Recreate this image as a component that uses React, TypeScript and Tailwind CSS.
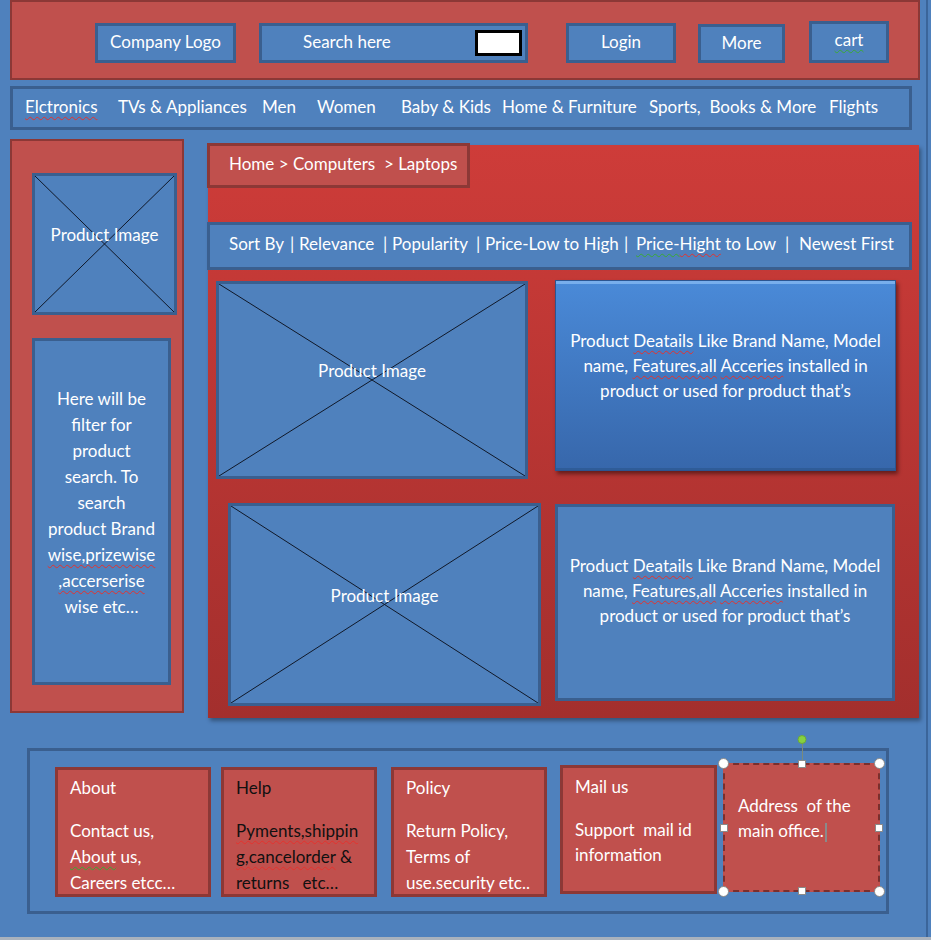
import React from "react";

const blueBox = "bg-[#4f81bd] border-[3px] border-[#3a5f8f]";
const redBox = "bg-[#c0504d] border-[3px] border-[#8c3836]";
const redWave = "underline decoration-wavy decoration-[#e5322d] decoration-1 underline-offset-[3px]";
const greenWave = "underline decoration-wavy decoration-[#3aa935] decoration-1 underline-offset-[3px]";

const navItems: [string, number][] = [
  ["Elctronics", 93],
  ["TVs & Appliances", 144],
  ["Men", 55],
  ["Women", 84],
  ["Baby & Kids", 101],
  ["Home & Furniture", 147],
  ["Sports,  Books & More", 180],
  ["Flights", 60],
];

// width of each slot in the sort bar, taken from where the next piece starts
const sortItems: [React.ReactNode, number][] = [
  ["Sort By", 61],
  ["|", 9],
  ["Relevance", 84],
  ["|", 9],
  ["Popularity", 84],
  ["|", 9],
  ["Price-Low to High", 139],
  ["|", 12],
  [
    <>
      <span className={greenWave}>Price-</span>
      <span className={redWave}>Hight</span> to Low
    </>,
    149,
  ],
  ["|", 14],
  ["Newest First", 100],
];

function ImageBox({ className }: { className: string }) {
  return (
    <div className={`relative ${blueBox} ${className}`}>
      <svg className="absolute inset-0 h-full w-full" viewBox="0 0 100 100" preserveAspectRatio="none">
        <line x1="0" y1="0" x2="100" y2="100" stroke="#101828" strokeWidth="1" vectorEffect="non-scaling-stroke" />
        <line x1="100" y1="0" x2="0" y2="100" stroke="#101828" strokeWidth="1" vectorEffect="non-scaling-stroke" />
      </svg>
      <div className="relative flex h-full items-center justify-center pb-[18px] text-white">Product Image</div>
    </div>
  );
}

function DetailsText() {
  return (
    <>
      Product <span className={redWave}>Deatails</span> Like Brand Name, Model
      <br />
      name, <span className={redWave}>Features,all</span> <span className={redWave}>Acceries</span> installed in
      <br />
      product or used for product that’s
    </>
  );
}

function Handle({ className, round }: { className: string; round?: boolean }) {
  return (
    <span
      className={`absolute bg-white border border-[#8a8a8a] ${
        round ? "h-[11px] w-[11px] rounded-full" : "h-[8px] w-[8px]"
      } ${className}`}
    />
  );
}

export default function App() {
  return (
    <div className="h-[940px] w-[931px] bg-[#a9b2bd] font-[Lato,'Open_Sans',sans-serif] text-[17px] text-white">
      <div className="h-[937px] w-[931px] bg-[#4f81bd]">
        <div className="h-[937px] w-[928px] border-r-2 border-[#3b659a]">
          {/* Header */}
          <div className="ml-[10px] flex h-[80px] w-[910px] items-end border-2 border-[#8c3836] bg-[#c0504d] pb-[15px]">
            <div className={`ml-[83px] flex h-[40px] w-[141px] items-center justify-center pb-[2px] ${blueBox}`}>Company Logo</div>
            <div className={`ml-[23px] flex h-[40px] w-[269px] items-center ${blueBox}`}>
              <span className="pb-[2px] pl-[41px]">Search here</span>
              <span className="ml-auto mr-[3px] h-[26px] w-[47px] border-[3px] border-black bg-white" />
            </div>
            <div className={`ml-[38px] flex h-[40px] w-[110px] items-center justify-center pb-[2px] ${blueBox}`}>Login</div>
            <div className={`ml-[22px] flex h-[39px] w-[87px] items-center justify-center pb-[2px] ${blueBox}`}>More</div>
            <div className={`ml-[24px] flex h-[42px] w-[80px] items-center justify-center pb-[5px] ${blueBox}`}>
              <span className={greenWave}>cart</span>
            </div>
          </div>

          {/* Category nav */}
          <div className={`ml-[10px] mt-[6px] flex h-[44px] w-[902px] items-center pb-[3px] pl-[12px] ${blueBox}`}>
            {navItems.map(([label, w], i) => (
              <span key={label} className="whitespace-pre" style={{ width: w }}>
                {i === 0 ? <span className={redWave}>{label}</span> : label}
              </span>
            ))}
          </div>

          {/* Body */}
          <div className="mt-[9px] flex items-start">
            <div className="ml-[10px] h-[574px] w-[174px] border-2 border-[#8c3836] bg-[#c0504d]">
              <ImageBox className="ml-[20px] mt-[32px] h-[142px] w-[145px]" />
              <div className={`ml-[20px] mt-[23px] h-[347px] w-[139px] pt-[45px] text-center leading-[26px] ${blueBox}`}>
                Here will be
                <br />
                filter for
                <br />
                product
                <br />
                search. To
                <br />
                search
                <br />
                product Brand
                <br />
                <span className={redWave}>wise,prizewise</span>
                <br />
                <span className={redWave}>,accerserise</span>
                <br />
                wise etc…
              </div>
            </div>

            <div className="ml-[24px] mt-[6px] flex h-[573px] w-[711px] flex-col bg-gradient-to-b from-[#ce3c39] to-[#a32f2d] shadow-[2px_3px_4px_rgba(0,0,0,0.35)]">
              <div className={`-ml-px -mt-[2px] flex h-[45px] w-[263px] items-center pb-[4px] pl-[19px] ${redBox}`}>
                Home &gt; Computers &nbsp;&gt; Laptops
              </div>
              <div className={`-ml-px mt-[34px] flex h-[48px] w-[705px] items-center pb-[5px] pl-[19px] ${blueBox}`}>
                {sortItems.map(([label, w], i) => (
                  <span key={i} className="whitespace-pre" style={{ width: w }}>
                    {label}
                  </span>
                ))}
              </div>

              <div className="mt-[11px] flex items-start">
                <ImageBox className="ml-[8px] h-[198px] w-[312px]" />
                <div className="-mt-px ml-[27px] h-[191px] w-[341px] border border-[#2c5590] bg-gradient-to-b from-[#4a8ad8] to-[#3767ab] pt-[47px] text-center leading-[25px] shadow-[inset_0_3px_0_#78aeec,inset_0_-2px_0_#2f5c98,2px_3px_4px_rgba(0,0,0,0.45)]">
                  <DetailsText />
                </div>
              </div>

              <div className="mt-[24px] flex items-start">
                <ImageBox className="ml-[20px] h-[203px] w-[313px]" />
                <div className={`ml-[14px] mt-px h-[197px] w-[340px] pt-[46px] text-center leading-[25px] ${blueBox}`}>
                  <DetailsText />
                </div>
              </div>
            </div>
          </div>

          {/* Footer */}
          <div className={`ml-[27px] mt-[30px] flex h-[166px] w-[862px] items-start ${blueBox}`}>
            <div className={`ml-[25px] mt-[16px] h-[130px] w-[156px] overflow-hidden pl-[12px] pt-[5px] leading-[26px] ${redBox}`}>
              <div>About</div>
              <div className="mt-[17px]">
                Contact us,
                <br />
                <span className={greenWave}>About</span> us,
                <br />
                Careers etcc…
              </div>
            </div>
            <div className={`ml-[10px] mt-[16px] h-[130px] w-[156px] overflow-hidden pl-[12px] pt-[5px] leading-[26px] text-[#111] ${redBox}`}>
              <div>Help</div>
              <div className="mt-[17px]">
                <span className={redWave}>Pyments,shippin</span>
                <br />
                <span className={redWave}>g,cancelorder</span> &amp;
                <br />
                <span className="whitespace-pre">returns   etc…</span>
              </div>
            </div>
            <div className={`ml-[14px] mt-[16px] h-[130px] w-[156px] overflow-hidden pl-[12px] pt-[5px] leading-[26px] ${redBox}`}>
              <div>Policy</div>
              <div className="mt-[17px]">
                Return Policy,
                <br />
                Terms of
                <br />
                use.security etc..
              </div>
            </div>
            <div className={`ml-[13px] mt-[14px] h-[129px] w-[157px] overflow-hidden pl-[12px] pt-[6px] leading-[25px] ${redBox}`}>
              <div>Mail us</div>
              <div className="mt-[18px] whitespace-pre">
                Support  mail id
                <br />
                information
              </div>
            </div>
            <div className="relative ml-[6px] mt-[12px] h-[129px] w-[157px] border-2 border-dashed border-[#7a2f2d] bg-[#c0504d] pl-[13px] pt-[28px] leading-[25px]">
              <span className="whitespace-pre">Address  of the</span>
              <br />
              main office.
              <span className="ml-[1px] inline-block h-[19px] w-[2px] bg-[#8a8a8a] align-middle" />
              {/* selection handles */}
              <span className="absolute -top-[30px] left-1/2 h-[9px] w-[9px] -translate-x-1/2 rounded-full border border-[#6aa83a] bg-[#86d140]" />
              <span className="absolute -top-[21px] left-1/2 h-[17px] w-px bg-[#7a8a7a]" />
              <Handle round className="-left-[7px] -top-[7px]" />
              <Handle round className="-right-[7px] -top-[7px]" />
              <Handle round className="-bottom-[7px] -left-[7px]" />
              <Handle round className="-bottom-[7px] -right-[7px]" />
              <Handle className="-top-[5px] left-1/2 -translate-x-1/2" />
              <Handle className="-bottom-[5px] left-1/2 -translate-x-1/2" />
              <Handle className="-left-[5px] top-1/2 -translate-y-1/2" />
              <Handle className="-right-[5px] top-1/2 -translate-y-1/2" />
            </div>
          </div>
        </div>
      </div>
    </div>
  );
}
